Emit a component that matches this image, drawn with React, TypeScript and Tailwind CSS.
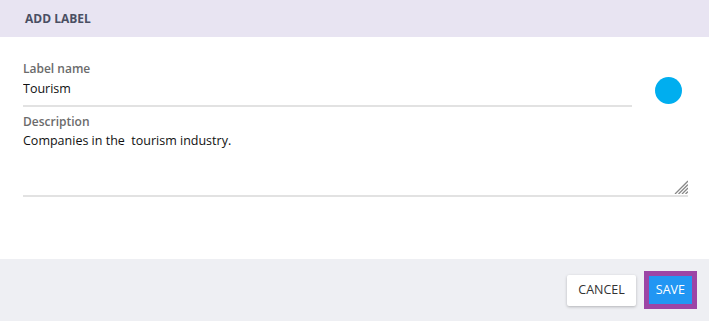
export default function App() {
  return (
    <div className="flex h-[321px] w-[709px] flex-col bg-white font-['Open_Sans',sans-serif]">
      <header className="flex h-[37px] shrink-0 items-center bg-[#e8e4f2] px-[25px]">
        <h1 className="text-[12px] font-bold text-[#4a4f63]">ADD LABEL</h1>
      </header>

      <main className="flex-1 px-[23px] pt-[24px]">
        <div className="flex items-start">
          <label className="block w-[609px]">
            <span className="block text-[12px] font-semibold leading-[16px] text-[#6b6b6b]">Label name</span>
            <input
              defaultValue="Tourism"
              className="mt-[2px] block w-full border-b-2 border-[#e2e2e2] pb-[6px] text-[12.5px] leading-[20px] text-[#111] outline-none"
            />
          </label>
          <span className="ml-[23px] mt-[16px] block h-[27px] w-[27px] rounded-full bg-[#00aeef]" />
        </div>

        <label className="relative mt-[7px] block w-[665px]">
          <span className="block text-[12px] font-semibold leading-[16px] text-[#6b6b6b]">Description</span>
          <textarea
            defaultValue="Companies in the  tourism industry."
            className="mt-[1px] block h-[66px] w-full resize-none border-b-2 border-[#e2e2e2] text-[12.5px] leading-[20px] text-[#111] outline-none"
          />
          <svg className="absolute bottom-[3px] right-0 h-[14px] w-[14px]" viewBox="0 0 14 14" stroke="#888" strokeWidth="1.3">
            <line x1="1" y1="14" x2="14" y2="1" />
            <line x1="4.5" y1="14" x2="14" y2="4.5" />
            <line x1="8" y1="14" x2="14" y2="8" />
            <line x1="11.5" y1="14" x2="14" y2="11.5" />
          </svg>
        </label>
      </main>

      <footer className="flex h-[62px] shrink-0 items-center justify-end gap-[13px] bg-[#eeeff3] pr-[17px]">
        <button className="h-[31px] rounded-[2px] bg-white px-[11px] text-[12.5px] text-[#333] shadow-[0_1px_3px_rgba(0,0,0,0.25)]">
          CANCEL
        </button>
        <button className="h-[28px] bg-[#2196f3] px-[7px] text-[12.5px] text-white outline outline-[5px] outline-[#9c45a6]">
          SAVE
        </button>
      </footer>
    </div>
  );
}
